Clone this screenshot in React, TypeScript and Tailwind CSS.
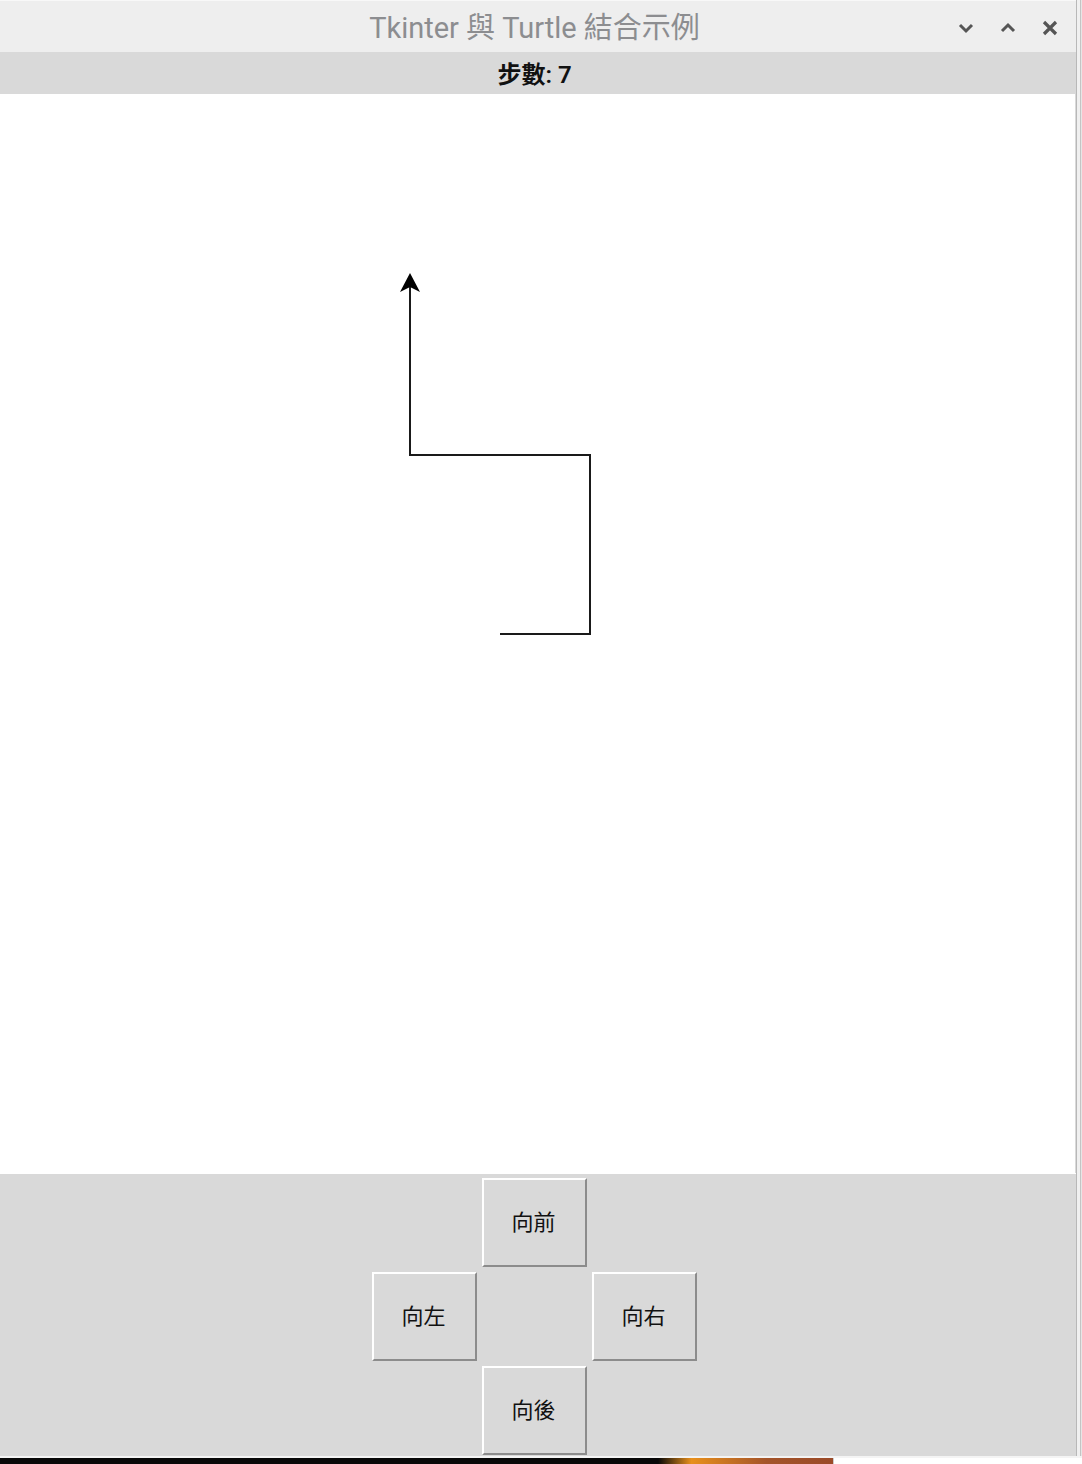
import React from "react";

const cjk = { fontFamily: 'Roboto, "Noto Sans CJK TC", sans-serif' };

function TkButton({ label }: { label: string }) {
  return (
    <div className="w-[105px] h-[89px] bg-[#d9d9d9] border-t-2 border-l-2 border-t-white border-l-white border-b-2 border-r-2 border-b-[#8c8c8c] border-r-[#8c8c8c] flex items-center justify-center text-[22px] text-[#111]" style={cjk}>
      <span className="pr-[2px]">{label}</span>
    </div>
  );
}

export default function App() {
  return (
    <div className="w-[1082px] h-[1464px] flex flex-col bg-white overflow-hidden">
      <div className="flex flex-1">
        <div className="w-[1076px] flex flex-col">
          {/* title bar */}
          <div className="h-[52px] bg-[#eeeeee] border-t border-t-[#f8f8f8] flex items-center relative">
            <div className="w-[1069px] flex justify-center pt-[4px] text-[29px] text-[#8c8d90] leading-none" style={cjk}>
              Tkinter 與 Turtle 結合示例
            </div>
            <div className="absolute right-[18px] top-[19px] flex items-center gap-[26px]">
              <svg width="16" height="12" viewBox="0 0 16 12"><path d="M2 3 L8 9 L14 3" stroke="#555" strokeWidth="3" fill="none" /></svg>
              <svg width="16" height="12" viewBox="0 0 16 12"><path d="M2 9 L8 3 L14 9" stroke="#555" strokeWidth="3" fill="none" /></svg>
              <svg width="16" height="16" viewBox="0 0 16 16"><path d="M2 2 L14 14 M14 2 L2 14" stroke="#555" strokeWidth="3.2" fill="none" /></svg>
            </div>
          </div>
          {/* label */}
          <div className="h-[42px] bg-[#d9d9d9] flex items-center">
            <div className="w-[1069px] flex justify-center pt-[3px] text-[24px] font-semibold text-[#111] leading-none" style={cjk}>
              步數:&nbsp;7
            </div>
          </div>
          {/* canvas */}
          <div className="h-[1079px] flex">
            <div className="w-[1075px] bg-white">
              <svg width="1075" height="1079" viewBox="0 94 1075 1079">
                <polyline points="500,634 590,634 590,455 410,455 410,285" fill="none" stroke="#1a1a1a" strokeWidth="2" />
                <polygon points="410,273 400,292 410,287 420,292" fill="#000" />
              </svg>
            </div>
            <div className="flex-1 bg-[#d9d9d9]" />
          </div>
          {/* controls */}
          <div className="flex-1 bg-[#d9d9d9] border-t border-t-white">
            <div className="pt-[4px] pl-[372px] grid grid-cols-[105px_105px_105px] gap-[5px] w-fit">
              <div />
              <TkButton label="向前" />
              <div />
              <TkButton label="向左" />
              <div />
              <TkButton label="向右" />
              <div />
              <TkButton label="向後" />
              <div />
            </div>
          </div>
        </div>
        <div className="w-[6px] flex">
          <div className="w-[1px] bg-[#b8b8b8]" />
          <div className="w-[3px] bg-[#f0f0f0]" />
          <div className="w-[1px] bg-[#c4c4c4]" />
          <div className="w-[1px] bg-[#e6e6e6]" />
        </div>
      </div>
      <div className="h-[2px] bg-[#f4f4f4]" />
      <div className="h-[6px] flex">
        <div className="w-[833px] bg-[linear-gradient(to_right,#080808_0%,#080808_79%,#e8901c_83%,#a4542a_92%,#9a4a28_100%)]" />
        <div className="flex-1 bg-white border-l border-l-[#ccc]" />
      </div>
    </div>
  );
}
